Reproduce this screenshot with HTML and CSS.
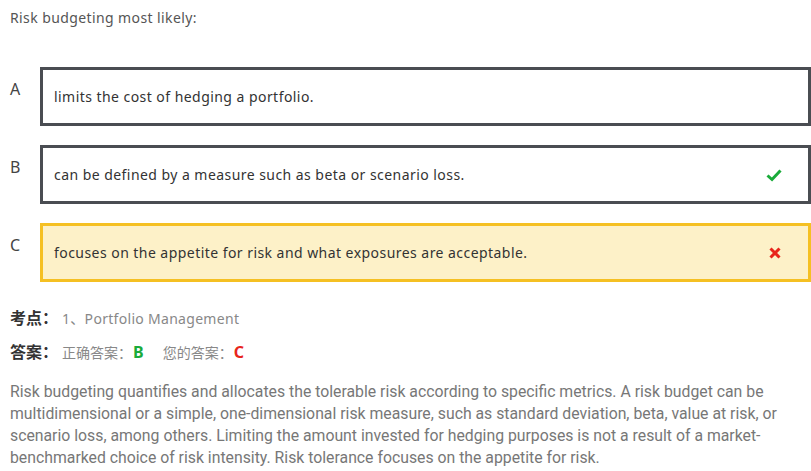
FILE: index.html
```html
<!DOCTYPE html>
<html>
<head>
<meta charset="utf-8">
<link rel="stylesheet" href="styles.css">
</head>
<body>
<div class="page">
  <div class="question">Risk budgeting most likely:</div>
  <div class="options">
    <div class="option">
      <div class="letter">A</div>
      <div class="box"><span class="text">limits the cost of hedging a portfolio.</span></div>
    </div>
    <div class="option">
      <div class="letter">B</div>
      <div class="box"><span class="text">can be defined by a measure such as beta or scenario loss.</span>
        <svg class="icon" width="16" height="14" viewBox="0 0 16 14"><path d="M1.5 7.5 L6 11.5 L14.5 2.5" fill="none" stroke="#1aab3a" stroke-width="3"/></svg>
      </div>
    </div>
    <div class="option">
      <div class="letter">C</div>
      <div class="box wrong"><span class="text">focuses on the appetite for risk and what exposures are acceptable.</span>
        <svg class="icon" width="14" height="14" viewBox="0 0 14 14"><path d="M2.5 2.5 L11.5 11.5 M11.5 2.5 L2.5 11.5" fill="none" stroke="#e8251b" stroke-width="3"/></svg>
      </div>
    </div>
  </div>
  <div class="meta">
    <div class="meta-row"><span class="meta-label">考点：</span><span class="meta-value">1、Portfolio Management</span></div>
    <div class="meta-row"><span class="meta-label">答案：</span><span class="meta-small">正确答案：</span><span class="ans right">B</span><span class="meta-small">您的答案：</span><span class="ans wrong-ans">C</span></div>
  </div>
  <p class="explain">Risk budgeting quantifies and allocates the tolerable risk according to specific metrics. A risk budget can be multidimensional or a simple, one-dimensional risk measure, such as standard deviation, beta, value at risk, or scenario loss, among others. Limiting the amount invested for hedging purposes is not a result of a market-benchmarked choice of risk intensity. Risk tolerance focuses on the appetite for risk.</p>
</div>
</body>
</html>
```

FILE: styles.css
```css
html, body {
  margin: 0;
  padding: 0;
  background: #fff;
}
body {
  font-family: "Noto Sans", "Noto Sans CJK SC", sans-serif;
}
.page {
  padding: 8px 0 0 10px;
}
.question {
  font-size: 14px;
  letter-spacing: 0.4px;
  color: #555;
  line-height: 20px;
}
.options {
  margin-top: 39px;
  display: flex;
  flex-direction: column;
  gap: 19px;
}
.option {
  display: flex;
  align-items: flex-start;
}
.letter {
  width: 30px;
  font-size: 16px;
  color: #444;
  line-height: 20px;
  padding-top: 12px;
}
.box {
  flex: 1;
  height: 53px;
  border: 3px solid #4a4d52;
  display: flex;
  align-items: center;
  justify-content: space-between;
  padding: 0 26px 0 11px;
}
.box.wrong {
  border-color: #f5c023;
  background: #fdf1c8;
}
.text {
  font-size: 14px;
  letter-spacing: 0.45px;
  color: #333;
}
.meta {
  margin-top: 23px;
}
.meta-row {
  display: flex;
  align-items: baseline;
  height: 34px;
}
.meta-label {
  display: inline-block;
  width: 52px;
  font-family: "Noto Sans CJK SC", sans-serif;
  font-weight: 700;
  font-size: 16px;
  color: #333;
}
.meta-value {
  font-size: 14px;
  letter-spacing: 0.3px;
  color: #888;
}
.meta-small {
  font-family: "Noto Sans CJK SC", sans-serif;
  font-size: 14px;
  color: #888;
}
.ans {
  font-weight: 700;
  font-size: 16px;
  margin: 0 19px 0 1px;
}
.right { color: #1aab3a; }
.wrong-ans { color: #e8251b; }
.explain {
  margin: 8px 0 0;
  padding-right: 16px;
  font-family: Roboto, sans-serif;
  font-size: 15.8px;
  line-height: 22px;
  color: #777;
}
```
